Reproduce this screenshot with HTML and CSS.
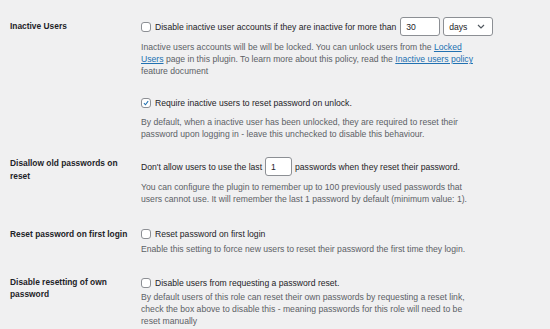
FILE: index.html
```html
<!DOCTYPE html>
<html lang="en">
<head>
  <meta charset="UTF-8">
  <title>Password policies</title>
  <link rel="stylesheet" href="styles.css">
</head>
<body>
  <div class="form-table">
    <div class="row row-inactive">
      <div class="label">Inactive Users</div>
      <div class="field">
        <div class="line">
          <span class="check"></span>
          <span>Disable inactive user accounts if they are inactive for more than</span>
          <span class="input num-30">30</span>
          <span class="select">days <svg width="8" height="5" viewBox="0 0 8 5"><path d="M1 1l3 3 3-3" fill="none" stroke="#50575e" stroke-width="1.2"/></svg></span>
        </div>
        <p class="desc">Inactive users accounts will be will be locked. You can unlock users from the <a href="#">Locked Users</a> page in this plugin. To learn more about this policy, read the <a href="#">Inactive users policy</a> feature document</p>
        <div class="line sub">
          <span class="check checked"><svg width="10" height="10" viewBox="0 0 10 10"><path d="M2.4 5.2l1.9 2 3.4-4.6" fill="none" stroke="#2271b1" stroke-width="1.3"/></svg></span>
          <span>Require inactive users to reset password on unlock.</span>
        </div>
        <p class="desc">By default, when a inactive user has been unlocked, they are required to reset their password upon logging in - leave this unchecked to disable this behaviour.</p>
      </div>
    </div>

    <div class="row row-history">
      <div class="label">Disallow old passwords on reset</div>
      <div class="field">
        <div class="line">
          <span>Don't allow users to use the last</span>
          <span class="input num-1">1</span>
          <span>passwords when they reset their password.</span>
        </div>
        <p class="desc">You can configure the plugin to remember up to 100 previously used passwords that users cannot use. It will remember the last 1 password by default (minimum value: 1).</p>
      </div>
    </div>

    <div class="row row-first">
      <div class="label">Reset password on first login</div>
      <div class="field">
        <div class="line">
          <span class="check"></span>
          <span>Reset password on first login</span>
        </div>
        <p class="desc">Enable this setting to force new users to reset their password the first time they login.</p>
      </div>
    </div>

    <div class="row row-own">
      <div class="label">Disable resetting of own password</div>
      <div class="field">
        <div class="line">
          <span class="check"></span>
          <span>Disable users from requesting a password reset.</span>
        </div>
        <p class="desc">By default users of this role can reset their own passwords by requesting a reset link, check the box above to disable this - meaning passwords for this role will need to be reset manually</p>
      </div>
    </div>
  </div>
</body>
</html>
```

FILE: styles.css
```css
body {
  margin: 0;
  background: #f0f0f1;
  font-family: "Liberation Sans", Arial, sans-serif;
  font-size: 8.6px;
  color: #1d2327;
}
.form-table { padding: 0 10px; }
.row { display: grid; grid-template-columns: 131px 1fr; }
.label {
  font-weight: bold;
  font-size: 8.4px;
  line-height: 13px;
  width: 120px;
}
.field { width: 330px; }
.line {
  display: flex;
  align-items: center;
  gap: 3px;
  line-height: 12px;
  white-space: nowrap;
}
.line > * { flex-shrink: 0; }
.check {
  box-sizing: border-box;
  width: 10px;
  height: 10px;
  border: 1px solid #8c8f94;
  border-radius: 3px;
  background: #fff;
  display: inline-flex;
  align-items: center;
  justify-content: center;
  margin-right: 1px;
}
.check svg { display: block; }
.input, .select {
  box-sizing: border-box;
  height: 19px;
  border: 1px solid #8c8f94;
  border-radius: 3px;
  background: #fff;
  display: inline-flex;
  align-items: center;
  padding: 0 5px;
}
.num-30 { width: 40px; margin-left: 1px; }
.num-1 { width: 27px; }
.select { width: 50px; justify-content: space-between; padding-right: 7px; }
.desc {
  margin: 0;
  color: #5c6166;
  font-size: 8.65px;
  line-height: 12px;
  width: 338px;
}
a { color: #2271b1; }

.row-inactive { padding-top: 17px; }
.row-inactive .label { padding-top: 3px; }
.row-inactive .desc { margin-top: 5px; }
.row-inactive .sub { margin-top: 20px; }
.row-inactive .desc:last-child { margin-top: 8px; line-height: 11.5px; width: 330px; }

.row-history { padding-top: 17px; }
.row-history .desc { margin-top: 6px; line-height: 11.5px; width: 330px; }

.row-first { padding-top: 23px; }
.row-first .desc { margin-top: 3px; }

.row-own { padding-top: 22px; }
.row-own .label { line-height: 11.5px; }
.row-own .desc { margin-top: 2px; width: 330px; }
```
